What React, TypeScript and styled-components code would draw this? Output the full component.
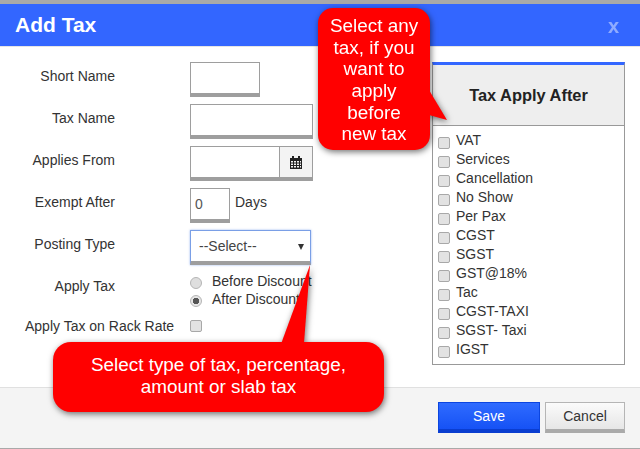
import React from "react";
import styled, { createGlobalStyle } from "styled-components";

const TAXES = [
  "VAT",
  "Services",
  "Cancellation",
  "No Show",
  "Per Pax",
  "CGST",
  "SGST",
  "GST@18%",
  "Tac",
  "CGST-TAXI",
  "SGST- Taxi",
  "IGST"
];

const CalendarIcon = () => (
  <svg width="12" height="13" viewBox="0 0 12 13" fill="#222">
    <path d="M2 0h2v2h4V0h2v2h2v11H0V2h2z" />
    <path
      fill="#f3f3f3"
      d="M1 5h2v1.500H1zM4 5h2v1.500H4zM7 5h2v1.500H7zM10 5h1v1.500h-1zM1 7.500h2V9H1zM4 7.500h2V9H4zM7 7.500h2V9H7zM10 7.500h1V9h-1zM1 10h2v1.500H1zM4 10h2v1.500H4zM7 10h2v1.500H7zM10 10h1v1.500h-1z"
    />
  </svg>
);

const App = () => {
  return (
    <Page>
      <GlobalStyle />
      <TopStrip />
      <Header>
        <h1>Add Tax</h1>
        <Close>x</Close>
      </Header>
      <Body>
        <Form>
          <Row>
            <Label>Short Name</Label>
            <Input $width={70} />
          </Row>
          <Row>
            <Label>Tax Name</Label>
            <Input $width={123} />
          </Row>
          <Row>
            <Label>Applies From</Label>
            <DateGroup>
              <DateInput />
              <CalendarButton>
                <CalendarIcon />
              </CalendarButton>
            </DateGroup>
          </Row>
          <Row>
            <Label>Exempt After</Label>
            <Input $width={40} defaultValue="0" />
            <Unit>Days</Unit>
          </Row>
          <Row>
            <Label>Posting Type</Label>
            <SelectBox>
              <span>--Select--</span>
              <Caret />
            </SelectBox>
          </Row>
          <RadioRow>
            <RadioLabel>Apply Tax</RadioLabel>
            <RadioList>
              <RadioItem>
                <Radio />
                <span>Before Discount</span>
              </RadioItem>
              <RadioItem>
                <Radio $checked />
                <span>After Discount</span>
              </RadioItem>
            </RadioList>
          </RadioRow>
          <RackRow>
            <RackLabel>Apply Tax on Rack Rate</RackLabel>
            <CheckBox />
          </RackRow>
        </Form>
        <Panel>
          <PanelHead>Tax Apply After</PanelHead>
          <PanelList>
            {TAXES.map((tax) => (
              <PanelItem key={tax}>
                <CheckBox />
                <span>{tax}</span>
              </PanelItem>
            ))}
          </PanelList>
        </Panel>
      </Body>
      <Footer>
        <SaveButton>Save</SaveButton>
        <CancelButton>Cancel</CancelButton>
      </Footer>
      <BottomLine />
      <TaxCallout>
        <span>
          Select any
          <br />
          tax, if you
          <br />
          want to
          <br />
          apply
          <br />
          before
          <br />
          new tax
        </span>
        <TaxTail />
      </TaxCallout>
      <TypeCallout>
        Select type of tax, percentage, amount or slab tax
        <TypeTail />
      </TypeCallout>
    </Page>
  );
};

export default App;

const GlobalStyle = createGlobalStyle`
  html, body {
    margin: 0;
    padding: 0;
    background: #fff;
  }
  * {
    box-sizing: border-box;
  }
`;

const Page = styled.div`
  position: relative;
  width: 640px;
  height: 449px;
  overflow: hidden;
  display: flex;
  flex-direction: column;
  font-family: "Liberation Sans", Arial, sans-serif;
  font-size: 14px;
  color: #333;
`;

const TopStrip = styled.div`
  height: 4px;
  background: #a9a9a9;
`;

const Header = styled.header`
  height: 42px;
  padding: 0 21px 0 15px;
  display: flex;
  justify-content: space-between;
  align-items: center;
  background: #3366ff;
  border-bottom: 1px solid #e5e5e5;
  box-sizing: content-box;
  color: #fff;
  & > h1 {
    margin: 0;
    font-size: 21px;
    font-weight: 700;
  }
`;

const Close = styled.span`
  font-size: 20px;
  font-weight: 700;
  opacity: 0.45;
  margin-top: 2px;
`;

const Body = styled.main`
  height: 340px;
  padding: 15px 15px 0 0;
  display: flex;
  justify-content: space-between;
`;

const Form = styled.div`
  width: 320px;
  display: flex;
  flex-direction: column;
`;

const Row = styled.div`
  height: 35px;
  margin-bottom: 7px;
  display: flex;
  align-items: flex-start;
`;

const Label = styled.label`
  width: 115px;
  margin-right: 75px;
  padding-top: 6px;
  text-align: right;
  line-height: 16px;
`;

const RadioLabel = styled(Label)`
  padding-top: 5px;
`;

const Input = styled.input<{ $width: number }>`
  width: ${({ $width }) => $width}px;
  height: 35px;
  padding: 0 4px;
  border: 1px solid #9e9e9e;
  border-bottom-width: 4px;
  border-radius: 0;
  outline: none;
  font-family: inherit;
  font-size: 14px;
  color: #555;
`;

const DateGroup = styled.div`
  display: flex;
`;

const DateInput = styled.input`
  width: 89px;
  height: 35px;
  border: 1px solid #9e9e9e;
  border-bottom-width: 4px;
  border-right: 0;
  outline: none;
`;

const CalendarButton = styled.div`
  width: 34px;
  height: 35px;
  display: flex;
  justify-content: center;
  align-items: center;
  background: #f3f3f3;
  border: 1px solid #9e9e9e;
  border-bottom-width: 4px;
`;

const Unit = styled.span`
  margin-left: 5px;
  padding-top: 6px;
  line-height: 16px;
`;

const SelectBox = styled.div`
  width: 121px;
  height: 35px;
  padding: 0 6px 0 8px;
  display: flex;
  justify-content: space-between;
  align-items: center;
  color: #444;
  border: 1px solid #7a9fe6;
  border-bottom: 4px solid #9e9e9e;
  box-shadow: 0 0 2px rgba(80, 130, 230, 0.6);
`;

const Caret = styled.i`
  width: 0;
  height: 0;
  margin-top: 1px;
  border-left: 3.500px solid transparent;
  border-right: 3.500px solid transparent;
  border-top: 6px solid #333;
`;

const RadioRow = styled.div`
  height: 38px;
  margin-top: 1px;
  display: flex;
  align-items: flex-start;
`;

const RadioList = styled.div`
  display: flex;
  flex-direction: column;
  gap: 2px;
`;

const RadioItem = styled.div`
  height: 16px;
  display: flex;
  align-items: center;
  gap: 10px;
  line-height: 16px;
  white-space: nowrap;
`;

const Radio = styled.span<{ $checked?: boolean }>`
  width: 12px;
  height: 12px;
  margin-top: 3px;
  border-radius: 50%;
  border: 1px solid #b5b5b5;
  background: ${({ $checked }) =>
    $checked ? "radial-gradient(circle, #555 0 3px, #e6e6e6 3.500px)" : "#dedede"};
`;

const RackRow = styled.div`
  margin-top: 7px;
  height: 16px;
  display: flex;
  align-items: center;
`;

const RackLabel = styled.label`
  width: 190px;
  padding-left: 25px;
  line-height: 16px;
  white-space: nowrap;
`;

const CheckBox = styled.span`
  flex: none;
  width: 12px;
  height: 12px;
  border: 1px solid #a8a8a8;
  border-radius: 2px;
  background: #e2e2e2;
`;

const Panel = styled.aside`
  width: 193px;
  height: 303px;
  border: 1px solid #999;
  border-top: 3px solid #3366ff;
`;

const PanelHead = styled.div`
  height: 61px;
  display: flex;
  justify-content: center;
  align-items: center;
  background: #eeeeee;
  border-bottom: 1px solid #999;
  font-size: 16.400px;
  font-weight: 700;
  color: #222;
`;

const PanelList = styled.div`
  padding: 6px 5px 0;
  display: flex;
  flex-direction: column;
`;

const PanelItem = styled.div`
  height: 19px;
  display: flex;
  align-items: center;
  gap: 6px;
  & > span:last-child {
    margin-top: -3px;
  }
  & > span:first-child {
    margin-top: 2px;
  }
`;

const Footer = styled.footer`
  height: 61px;
  padding: 14px 15px 0 0;
  display: flex;
  justify-content: flex-end;
  gap: 5px;
  background: #f4f4f4;
  border-top: 1px solid #e0e0e0;
`;

const SaveButton = styled.button`
  width: 102px;
  height: 31px;
  padding: 0;
  color: #fff;
  font-family: inherit;
  font-size: 14px;
  background: linear-gradient(#2f6bff, #1652f5);
  border: 1px solid #0b45e0;
  border-bottom: 4px solid #0a3dd0;
`;

const CancelButton = styled.button`
  width: 80px;
  height: 31px;
  padding: 0;
  color: #333;
  font-family: inherit;
  font-size: 14px;
  background: linear-gradient(#fbfbfb, #e6e6e6);
  border: 1px solid #b5b5b5;
  border-bottom: 4px solid #aaaaaa;
`;

const BottomLine = styled.div`
  height: 1px;
  background: #a9a9a9;
`;

const Callout = styled.div`
  position: absolute;
  display: flex;
  align-items: center;
  justify-content: center;
  text-align: center;
  color: #fff;
  background: #ff0000;
  font-size: 18.900px;
  line-height: 21.600px;
  filter: drop-shadow(1px 2px 3px rgba(0, 0, 0, 0.55));
`;

const TaxCallout = styled(Callout)`
  left: 318px;
  top: 8px;
  width: 112px;
  height: 142px;
  padding-top: 2px;
  border-radius: 15px;
`;

const TaxTail = styled.i`
  position: absolute;
  left: 111px;
  top: 82px;
  width: 18px;
  height: 30px;
  background: #ff0000;
  clip-path: polygon(0 0, 100% 100%, 0 83%);
`;

const TypeCallout = styled(Callout)`
  left: 53px;
  top: 342px;
  width: 331px;
  height: 70px;
  padding: 0 32px 3px;
  border-radius: 18px;
`;

const TypeTail = styled.i`
  position: absolute;
  left: 228px;
  top: -77px;
  width: 29px;
  height: 79px;
  background: #ff0000;
  clip-path: polygon(100% 0, 79% 100%, 0 100%);
`;
